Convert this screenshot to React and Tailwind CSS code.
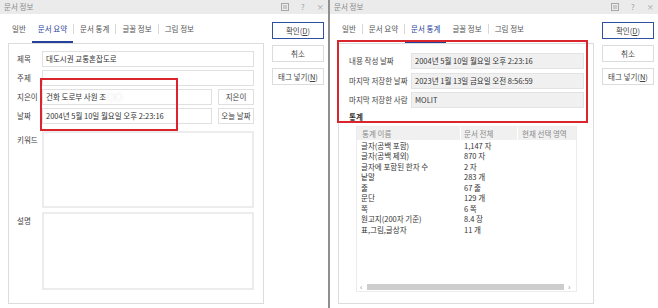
import React from 'react';

const FONT = { fontFamily: '"Noto Sans CJK KR", "Noto Sans", sans-serif' };

const TABS = ['일반', '문서 요약', '문서 통계', '글꼴 정보', '그림 정보'];

function TitleBar() {
    return (
        <div className="flex h-[14px] items-center justify-between bg-[#ebebeb] pl-[4px] pr-[4px] text-[7.5px] text-[#8a8a8a]">
            <span>문서 정보</span>
            <div className="flex items-center gap-[12px] text-[#a0a0a0]">
                <svg width="8" height="8" viewBox="0 0 8 8">
                    <rect x="0.5" y="0.5" width="7" height="7" fill="none" stroke="#a8a8a8" />
                    <line x1="2" y1="3" x2="6" y2="3" stroke="#a8a8a8" />
                    <line x1="2" y1="5" x2="6" y2="5" stroke="#a8a8a8" />
                </svg>
                <span>?</span>
                <span>×</span>
            </div>
        </div>
    );
}

// separators sit before the tabs listed in seps
function Tabs({ active, seps }) {
    return (
        <div className="ml-[-2px] flex h-[29px] items-stretch text-[7.5px] text-[#555]">
            {TABS.map((t, i) => (
                <div key={t} className="flex items-center">
                    {seps.includes(i) && <span className="h-[10px] w-px bg-[#d8d8d8]" />}
                    <div className={'relative flex h-full items-center px-[6px] ' + (i === active ? 'text-[#1f3f99]' : '')}>
                        {t}
                        {i === active && <span className="absolute bottom-0 left-0 right-0 h-[2px] bg-[#23409a]" />}
                    </div>
                </div>
            ))}
        </div>
    );
}

function Buttons() {
    return (
        <div className="ml-[8px] mt-[8px] flex w-[52px] flex-col gap-[6px] text-[7.5px] text-[#444]">
            <div className="flex h-[17px] items-center justify-center border-[1.5px] border-[#2f4f9f] bg-white">
                확인(<span className="underline">D</span>)
            </div>
            <div className="flex h-[17px] items-center justify-center border border-[#dcdcdc] bg-white">취소</div>
            <div className="flex h-[17px] items-center justify-center border border-[#dcdcdc] bg-white">
                태그 넣기(<span className="underline">N</span>)
            </div>
        </div>
    );
}

function Dialog({ active, seps, children }) {
    return (
        <div className="flex h-full w-[328px] flex-col bg-white">
            <TitleBar />
            <div className="flex flex-1">
                <div className="flex w-[264px] flex-col pl-[8px]">
                    <Tabs active={active} seps={seps} />
                    <div className="relative mb-[4px] flex-1 border border-[#dcdcdc]">{children}</div>
                </div>
                <Buttons />
            </div>
        </div>
    );
}

function Field({ label, children }) {
    return (
        <div className="flex h-[16px] items-center">
            <span className="w-[25px] text-[#444]">{label}</span>
            {children}
        </div>
    );
}

function Input({ children, className = '' }) {
    return (
        <div className={'flex h-full flex-1 items-center border border-[#e0e0e0] pl-[3px] text-[#333] ' + className}>
            {children}
        </div>
    );
}

function Summary() {
    return (
        <div className="flex h-full flex-col pb-[13px] pl-[8px] pr-[9px] pt-[7px] text-[7.5px]">
            <div className="flex flex-col gap-[3px]">
                <Field label="제목"><Input>대도시권 교통혼잡도로</Input></Field>
                <Field label="주제"><Input /></Field>
                <Field label="지은이">
                    <Input>
                        건화 도로부 사원 조<span className="ml-[1px] text-[#bbb] blur-[1.2px]">○○</span>
                    </Input>
                    <div className="ml-[6px] flex h-full w-[36px] items-center justify-center border border-[#e0e0e0] text-[#444]">지은이</div>
                </Field>
                <Field label="날짜">
                    <Input>2004년 5월 10일 월요일 오후 2:23:16</Input>
                    <div className="ml-[6px] flex h-full w-[36px] items-center justify-center border border-[#e0e0e0] text-[#444]">오늘 날짜</div>
                </Field>
            </div>
            <div className="mt-[7px] flex h-[77px]">
                <span className="w-[25px] pt-[3px] text-[#444]">키워드</span>
                <div className="flex-1 border-2 border-[#ececec]" />
            </div>
            <div className="mt-[4px] flex flex-1">
                <span className="w-[25px] pt-[3px] text-[#444]">설명</span>
                <div className="flex-1 border-2 border-[#ececec]" />
            </div>
            <div className="pointer-events-none absolute left-[31px] top-[34px] h-[53px] w-[138px] border-[2.5px] border-[#d9252b]" />
        </div>
    );
}

const STATS = [
    ['글자(공백 포함)', '1,147 자'],
    ['글자(공백 제외)', '870 자'],
    ['글자에 포함된 한자 수', '2 자'],
    ['낱말', '283 개'],
    ['줄', '67 줄'],
    ['문단', '129 개'],
    ['쪽', '6 쪽'],
    ['원고지(200자 기준)', '8.4 장'],
    ['표,그림,글상자', '11 개'],
];

function StatField({ label, value }) {
    return (
        <div className="flex h-[16px] items-center">
            <span className="w-[62px] text-[#444]">{label}</span>
            <div className="flex h-full flex-1 items-center border border-[#e3e3e3] bg-[#f0f0f0] pl-[3px] text-[#333]">{value}</div>
        </div>
    );
}

function Stats() {
    return (
        <div className="flex h-full flex-col pb-[11px] pl-[10px] pr-[9px] pt-[9px] text-[7.5px]">
            <div className="flex flex-col gap-[3.5px]">
                <StatField label="내용 작성 날짜" value="2004년 5월 10일 월요일 오후 2:23:16" />
                <StatField label="마지막 저장한 날짜" value="2023년 1월 13일 금요일 오전 8:56:59" />
                <StatField label="마지막 저장한 사람" value="MOLIT" />
            </div>
            <div className="mt-[4px] flex h-[10px] items-center font-bold text-[#333]">통계</div>
            <div className="ml-[7px] mt-[4px] flex w-[221px] flex-1 flex-col border border-[#ececec]">
                <div className="flex h-[13px] items-center bg-[#f0f0f0] text-[#8a8a8a]">
                    <span className="w-[103px] pl-[5px]">통계 이름</span>
                    <span className="h-full w-px bg-white" />
                    <span className="w-[56px] pl-[3px]">문서 전체</span>
                    <span className="h-full w-px bg-white" />
                    <span className="flex-1 pl-[4px]">현재 선택 영역</span>
                </div>
                {STATS.map(([name, value]) => (
                    <div key={name} className="flex h-[10.5px] items-center text-[#333]">
                        <span className="w-[104px] pl-[4px]">{name}</span>
                        <span className="pl-[3px]">{value}</span>
                    </div>
                ))}
                <div className="flex-1" />
                <div className="flex h-[9px] items-center text-[8px] text-[#888]">
                    <span className="w-[10px] pl-[3px] leading-none">‹</span>
                    <div className="h-[6px] flex-1 bg-[#cdcdcd]" />
                    <span className="w-[12px] pl-[4px] leading-none">›</span>
                </div>
            </div>
            <div className="pointer-events-none absolute left-[-2px] top-[-4px] h-[83px] w-[251px] border-[2.5px] border-[#d9252b]" />
        </div>
    );
}

export default function App() {
    return (
        <div className="flex h-[308px] w-[658px] overflow-hidden bg-white" style={FONT}>
            <Dialog active={1} seps={[2, 3, 4]}>
                <Summary />
            </Dialog>
            <div className="w-[2px] bg-[#8f8f8f]" />
            <Dialog active={2} seps={[1, 2, 4]}>
                <Stats />
            </Dialog>
        </div>
    );
}
